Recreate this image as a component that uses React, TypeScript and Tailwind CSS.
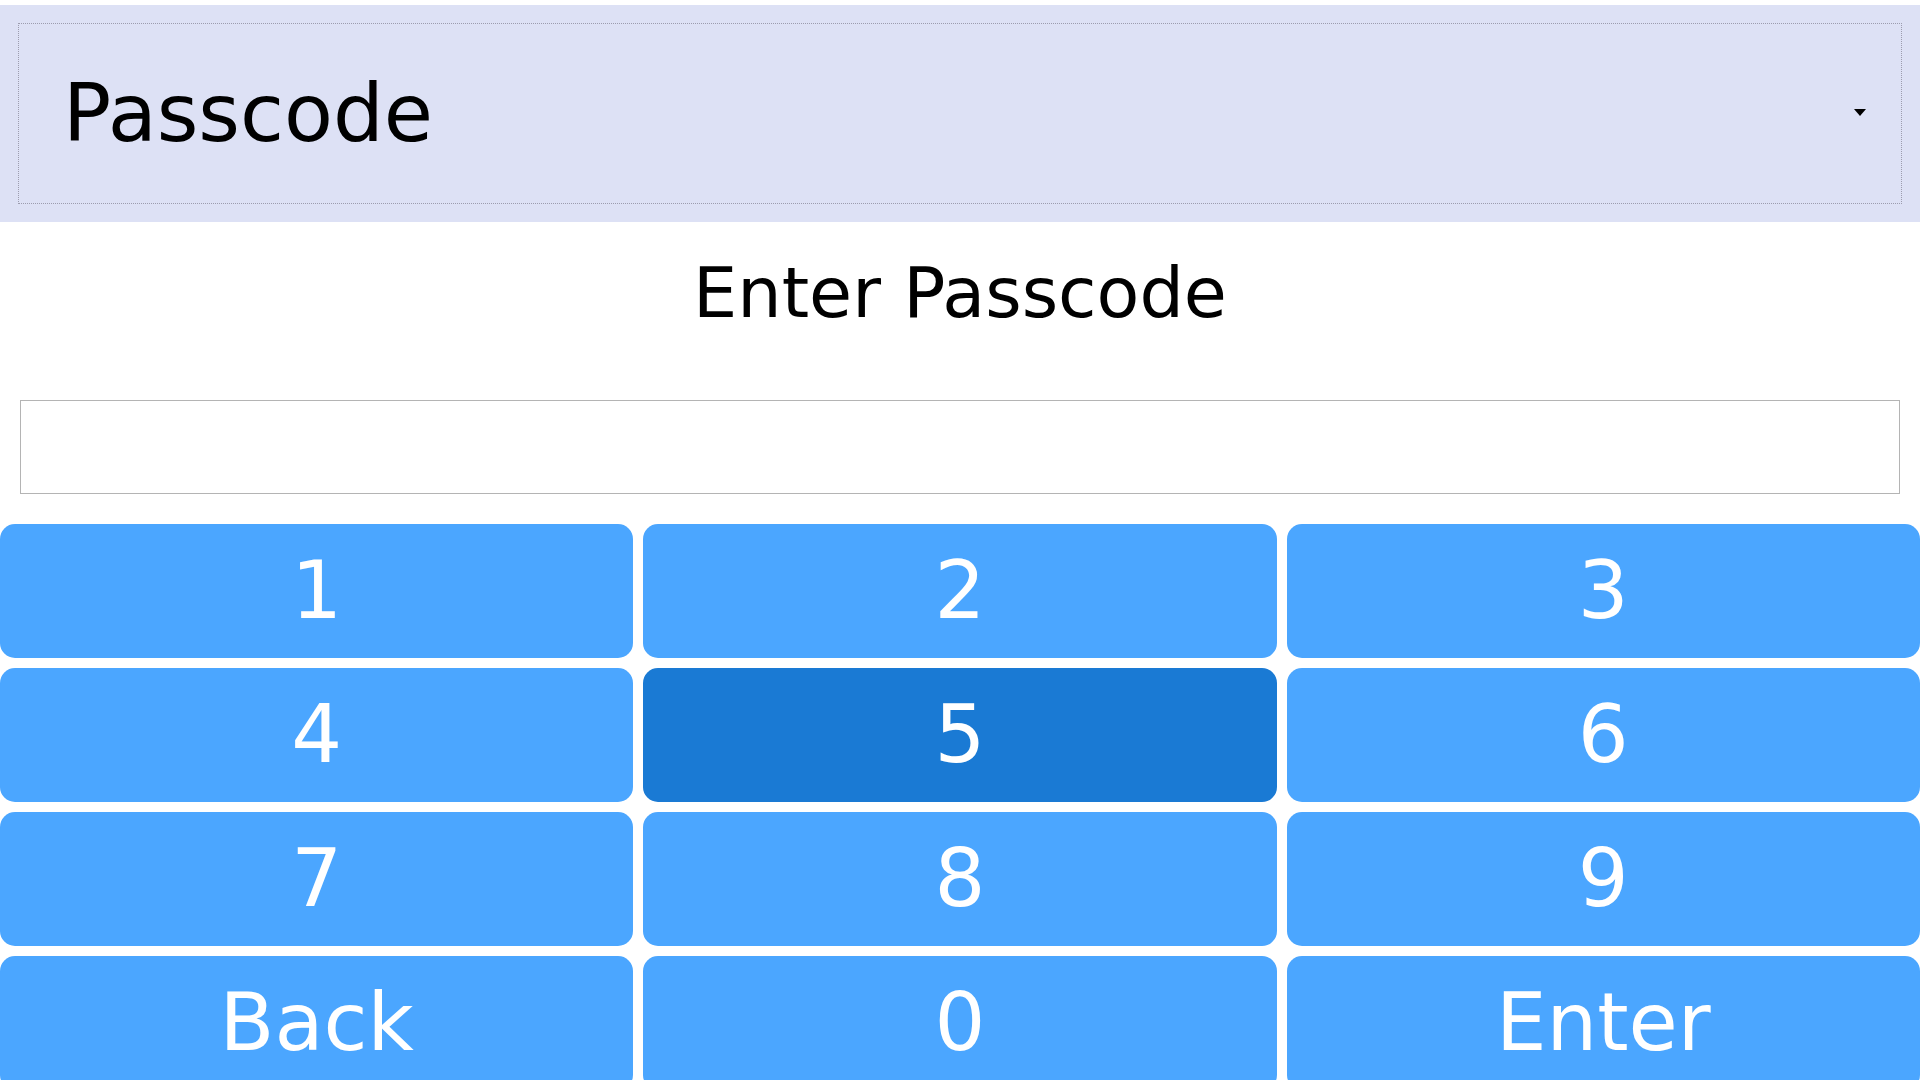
import { useState } from "react";

const keys = ["1", "2", "3", "4", "5", "6", "7", "8", "9", "Back", "0", "Enter"];

function App() {
  const [codigo, setCodigo] = useState("");
  const [activa] = useState("5");

  const pulsar = (k: string) => {
    if (k === "Back") {
      setCodigo(codigo.slice(0, -1));
    } else if (k === "Enter") {
      setCodigo("");
    } else {
      setCodigo(codigo + k);
    }
  };

  return (
    <div className="min-h-screen bg-white pt-[5px] font-['DejaVu_Sans',sans-serif] text-black">
      <div className="bg-[#dde1f5] p-[18px]">
        <div className="flex h-[181px] items-center justify-between border border-dotted border-[#9c9cae] pl-[44px] pr-[35px]">
          <span className="text-[80px] leading-none">Passcode</span>
          <svg width="12" height="7" viewBox="0 0 12 7" className="mt-[-2px]">
            <polygon points="0,0 12,0 6,7" fill="#000" />
          </svg>
        </div>
      </div>

      <h1 className="mt-[30px] text-center text-[70px] font-normal leading-[82px]">
        Enter Passcode
      </h1>

      <div className="mx-[20px] mt-[66px]">
        <input
          type="password"
          value={codigo}
          readOnly
          className="block h-[94px] w-full border border-[#b4b4b4] bg-white px-4 text-[60px] outline-none"
        />
      </div>

      <div className="mt-[30px] grid grid-cols-3 gap-[10px]">
        {keys.map((k) => (
          <button
            key={k}
            onClick={() => pulsar(k)}
            className={
              k === activa
                ? "flex h-[134px] items-center justify-center rounded-[15px] bg-[#1a7ad4] text-[80px] leading-none text-white"
                : "flex h-[134px] items-center justify-center rounded-[15px] bg-[#4ba6ff] text-[80px] leading-none text-white"
            }
          >
            {k}
          </button>
        ))}
      </div>
    </div>
  );
}

export default App;
